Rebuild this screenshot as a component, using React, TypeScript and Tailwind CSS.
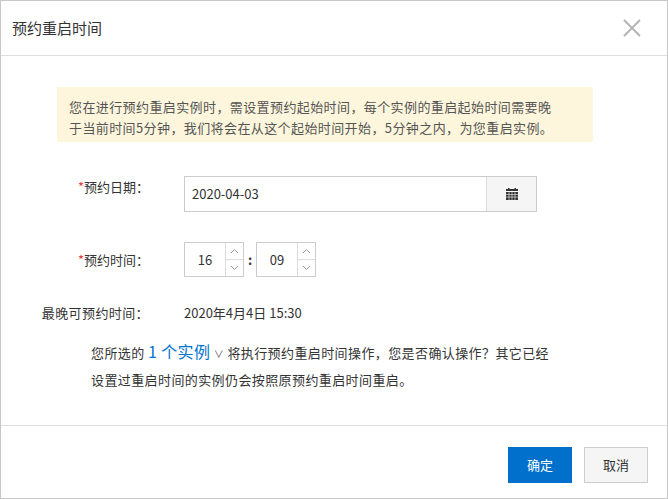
import React from "react";

const Up = () => (<svg width="9" height="6" viewBox="0 0 9 6"><path d="M1 5L4.5 1.5L8 5" stroke="#999" fill="none" strokeWidth="1"/></svg>);
const Down = () => (<svg width="9" height="6" viewBox="0 0 9 6"><path d="M1 1L4.5 4.5L8 1" stroke="#999" fill="none" strokeWidth="1"/></svg>);

function Spin({ v }: { v: string }) {
  return (
    <div className="flex w-[60px] h-[35px] border border-[#ccc]">
      <div className="flex-1 flex items-center justify-center">{v}</div>
      <div className="w-[18px] flex flex-col border-l border-[#ddd]">
        <div className="flex-1 flex items-center justify-center border-b border-[#ddd]"><Up /></div>
        <div className="flex-1 flex items-center justify-center"><Down /></div>
      </div>
    </div>
  );
}

export default function App() {
  return (
    <div className="w-[668px] h-[499px] bg-white border border-[#c8c8c8] flex flex-col text-[13px] text-[#333]" style={{ fontFamily: '"Microsoft YaHei","Noto Sans CJK SC",sans-serif' }}>
      <div className="h-[55px] border-b border-[#ddd] flex items-center justify-between pl-[11px] pr-[26px] shrink-0">
        <span className="text-[15px] text-[#333]">预约重启时间</span>
        <svg width="18" height="18" viewBox="0 0 18 18"><path d="M1 1L17 17M17 1L1 17" stroke="#b5b5b5" strokeWidth="2" /></svg>
      </div>
      <div className="flex-1 pt-[31px]">
        <div className="ml-[56px] w-[536px] h-[55px] bg-[#fdf6dc] pl-[12px] pt-[9px] text-[13px] tracking-[0.4px] leading-[21px] text-[#555] whitespace-nowrap">
          您在进行预约重启实例时，需设置预约起始时间，每个实例的重启起始时间需要晚<br />于当前时间5分钟，我们将会在从这个起始时间开始，5分钟之内，为您重启实例。
        </div>
        <div className="flex items-center mt-[34px] h-[36px]">
          <div className="w-[183px] text-right pr-[35px] self-start pt-[1px] leading-[20px]"><span className="text-[#e4393c]">*</span>预约日期：</div>
          <div className="flex w-[353px] h-[36px] border border-[#ccc]">
            <div className="flex-1 flex items-center pl-[7px]">2020-04-03</div>
            <div className="w-[50px] bg-[#f5f5f5] border-l border-[#ddd] flex items-center justify-center">
              <svg width="12" height="12" viewBox="0 0 12 12"><rect x="0" y="1" width="12" height="11" fill="#333"/><rect x="0" y="3" width="12" height="1" fill="#fff"/><rect x="2" y="0" width="1.5" height="2" fill="#333"/><rect x="8.5" y="0" width="1.5" height="2" fill="#333"/><path d="M0 6.5h12M0 9h12M3 4v8M6 4v8M9 4v8" stroke="#f5f5f5" strokeWidth="0.6"/></svg>
            </div>
          </div>
        </div>
        <div className="flex items-center mt-[30px] h-[35px]">
          <div className="w-[183px] text-right pr-[35px]"><span className="text-[#e4393c]">*</span>预约时间：</div>
          <Spin v="16" />
          <span className="w-[12px] text-center font-bold">:</span>
          <Spin v="09" />
        </div>
        <div className="flex items-center mt-[26px]">
          <div className="w-[183px] text-right pr-[35px] tracking-[0.4px]">最晚可预约时间：</div>
          <span>2020年4月4日 15:30</span>
        </div>
        <div className="ml-[90px] mt-[15px] w-[470px] leading-[26px] tracking-[0.4px]">
          您所选的 <span className="text-[#0073d0] text-[16px]">1 个实例</span> <span className="text-[10px] text-[#666]">∨</span> 将执行预约重启时间操作，您是否确认操作？其它已经设置过重启时间的实例仍会按照原预约重启时间重启。
        </div>
      </div>
      <div className="h-[73px] border-t border-[#ddd] flex items-start justify-end pt-[21px] pr-[19px] gap-[12px] shrink-0">
        <button className="w-[64px] h-[36px] bg-[#0070cc] text-white">确定</button>
        <button className="w-[64px] h-[36px] bg-[#f5f5f5] border border-[#ccc] text-[#333]">取消</button>
      </div>
    </div>
  );
}
